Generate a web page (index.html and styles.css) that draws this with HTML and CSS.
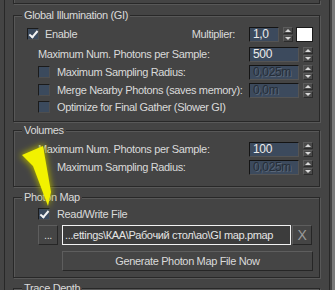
FILE: index.html
```html
<!DOCTYPE html>
<html lang="en">

<head>
    <meta charset="UTF-8">
    <title>Photon Map</title>
    <link rel="stylesheet" href="styles.css">
</head>

<body>
    <div class="panel">
        <div class="rollout">
            <div class="prev"></div>

            <fieldset class="group gi">
                <legend>Global Illumination (GI)</legend>
                <div class="row first">
                    <label class="check"><span class="box on"></span>Enable</label>
                    <span class="rlabel">Multiplier:</span>
                    <span class="field short">1,0</span>
                    <span class="spin"><i class="up"></i><i class="down"></i></span>
                    <span class="swatch"></span>
                </div>
                <div class="row second">
                    <span class="label">Maximum Num. Photons per Sample:</span>
                    <span class="field">500</span>
                    <span class="spin"><i class="up"></i><i class="down"></i></span>
                </div>
                <div class="row">
                    <label class="check label"><span class="box"></span>Maximum Sampling Radius:</label>
                    <span class="field off">0,025m</span>
                    <span class="spin"><i class="up"></i><i class="down"></i></span>
                </div>
                <div class="row">
                    <label class="check label"><span class="box"></span>Merge Nearby Photons (saves memory):</label>
                    <span class="field off">0,0m</span>
                    <span class="spin"><i class="up"></i><i class="down"></i></span>
                </div>
                <div class="row last">
                    <label class="check label"><span class="box"></span>Optimize for Final Gather (Slower GI)</label>
                </div>
            </fieldset>

            <fieldset class="group volumes">
                <legend>Volumes</legend>
                <div class="row">
                    <span class="label">Maximum Num. Photons per Sample:</span>
                    <span class="field">100</span>
                    <span class="spin"><i class="up"></i><i class="down"></i></span>
                </div>
                <div class="row">
                    <span class="label indent">Maximum Sampling Radius:</span>
                    <span class="field off">0,025m</span>
                    <span class="spin"><i class="up"></i><i class="down"></i></span>
                </div>
            </fieldset>

            <fieldset class="group pmap">
                <legend>Photon Map</legend>
                <div class="row">
                    <label class="check label"><span class="box on"></span>Read/Write File</label>
                </div>
                <div class="filerow">
                    <span class="btn dots">...</span>
                    <span class="path">...ettings\КАА\Рабочий стол\ao\GI map.pmap</span>
                    <span class="btn clear">X</span>
                </div>
                <div class="btn generate">Generate Photon Map File Now</div>
            </fieldset>

            <fieldset class="group trace">
                <legend>Trace Depth</legend>
            </fieldset>
        </div>
        <div class="scroll"><div class="thumb"></div></div>
    </div>

    <svg class="arrow" width="335" height="290" viewBox="0 0 335 290">
        <defs>
            <filter id="glow" x="-50%" y="-50%" width="200%" height="200%">
                <feGaussianBlur stdDeviation="3" />
            </filter>
        </defs>
        <polygon points="44,144 20,155 32,167 45,199 48,208 52,192" fill="#a8a800" filter="url(#glow)" />
        <polygon points="43,146 22,155 33,166 45,198 48,206 51,192" fill="#f2f200" />
    </svg>
</body>

</html>
```

FILE: styles.css
```css
* {
    box-sizing: border-box;
}

body {
    margin: 0;
    width: 335px;
    height: 290px;
    overflow: hidden;
    background: #444444;
    color: #dadada;
    font: 11px/13px "Liberation Sans", "Noto Sans CJK SC", Arial, sans-serif;
    letter-spacing: -0.35px;
    position: relative;
}

.panel {
    display: flex;
    height: 290px;
    overflow: hidden;
}

.rollout {
    margin-left: 4px;
    width: 326px;
    height: 290px;
    border-left: 1px solid #282828;
    border-right: 1px solid #282828;
    padding: 0 9px 0 8px;
}

.scroll {
    width: 5px;
    display: flex;
    justify-content: flex-end;
}

.thumb {
    width: 3px;
    background: #7a7a7a;
}

.prev {
    height: 4px;
    border: 1px solid #282828;
    border-top: 0;
    box-shadow: inset 1px 0 #585858, 1px 1px #585858;
}

/* group boxes */
.group {
    margin: 0;
    padding: 0 6px 6px 0;
    min-width: 0;
    border: 1px solid #282828;
    box-shadow: inset 1px 1px #585858, 1px 1px #585858;
}

.group legend {
    margin-left: 8px;
    padding: 0 2px;
    line-height: 13px;
    background: #444444;
}

.gi {
    margin-top: 5px;
    padding-top: 3px;
}

.volumes {
    margin-top: 2px;
    padding-top: 3px;
    padding-bottom: 10px;
}

.pmap {
    margin-top: 4px;
    padding-top: 1px;
}

.trace {
    margin-top: 4px;
    padding-bottom: 0;
}

/* rows */
.row {
    display: flex;
    align-items: center;
    height: 18px;
    padding-left: 24px;
    white-space: nowrap;
}

.row.first {
    padding-left: 13px;
}

.row.first .check {
    gap: 6px;
}

.row.second {
    margin-top: 2px;
}

.row.last {
    height: 16px;
}

.label {
    flex: 1;
}

.indent {
    padding-left: 19px;
}

.rlabel {
    flex: 1;
    text-align: right;
    margin-right: 14px;
}

.check {
    display: flex;
    align-items: center;
    gap: 7px;
}

.box {
    width: 12px;
    height: 12px;
    background: #3b4a5d;
    border-top: 1px solid #1b1b1b;
    border-left: 1px solid #1b1b1b;
    border-right: 1px solid #4e4e4e;
    border-bottom: 1px solid #4e4e4e;
    position: relative;
}

.box.on::after {
    content: "";
    position: absolute;
    left: 3px;
    top: 0px;
    width: 3px;
    height: 7px;
    border-right: 2px solid #f4f4f4;
    border-bottom: 2px solid #f4f4f4;
    transform: rotate(40deg);
}

.field {
    width: 50px;
    height: 15px;
    padding-left: 3px;
    line-height: 13px;
    font-size: 12px;
    background: #3c4a5d;
    color: #ececec;
    border-top: 1px solid #141414;
    border-left: 1px solid #141414;
    border-right: 1px solid #545454;
    border-bottom: 1px solid #545454;
}

.field.short {
    width: 30px;
}

.field.off {
    color: #252d37;
    text-shadow: 1px 1px rgba(130, 142, 158, 0.45);
}

.spin {
    width: 10px;
    height: 15px;
    margin-left: 4px;
    display: flex;
    flex-direction: column;
    gap: 1px;
}

.spin i {
    flex: 1;
    background: #4a4a4a;
    border: 1px solid #2c2c2c;
    border-top-color: #5c5c5c;
    border-left-color: #5c5c5c;
    display: flex;
    align-items: center;
    justify-content: center;
}

.spin i::after {
    content: "";
    border-left: 3px solid transparent;
    border-right: 3px solid transparent;
}

.spin .up::after {
    border-bottom: 3px solid #d8d8d8;
}

.spin .down::after {
    border-top: 3px solid #d8d8d8;
}

.swatch {
    width: 17px;
    height: 15px;
    margin-left: 3px;
    background: #ffffff;
    border: 1px solid #1a1a1a;
}

/* photon map */
.filerow {
    display: flex;
    height: 20px;
    margin-top: 2px;
    padding-left: 24px;
    padding-right: 1px;
}

.btn {
    background: #454545;
    border: 1px solid #262626;
    border-top-color: #5e5e5e;
    border-left-color: #5e5e5e;
    display: flex;
    align-items: center;
    justify-content: center;
    white-space: nowrap;
}

.dots {
    width: 20px;
    margin-right: 4px;
}

.path {
    flex: 1;
    border: 1px solid #f2f2f2;
    background: #3c3c3c;
    padding-left: 2px;
    display: flex;
    align-items: center;
    white-space: nowrap;
    overflow: hidden;
    color: #e4e4e4;
}

.clear {
    width: 20px;
    margin-left: 1px;
    color: #9a9a9a;
    font-size: 14px;
}

.generate {
    height: 20px;
    margin: 6px 0 0 48px;
}

.arrow {
    position: absolute;
    left: 0;
    top: 0;
    pointer-events: none;
}
```
